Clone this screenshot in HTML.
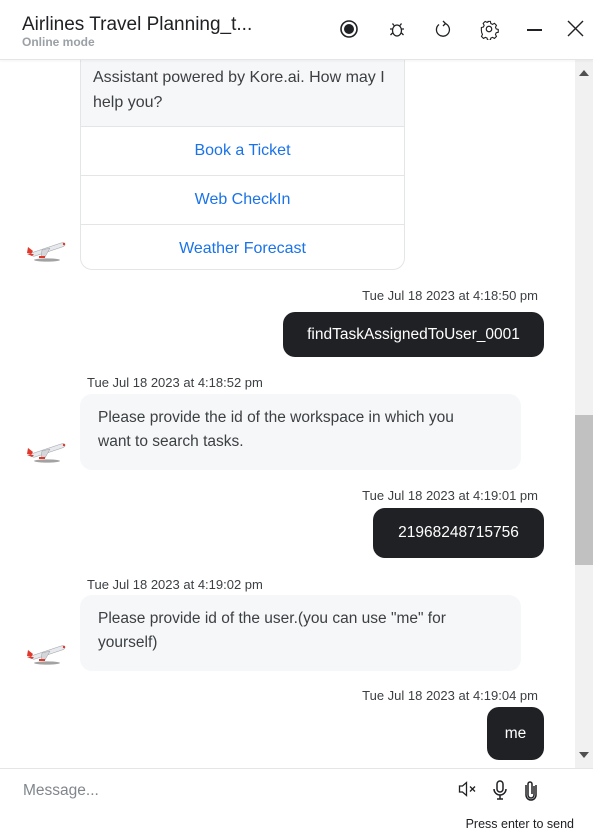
<!DOCTYPE html>
<html><head><meta charset="utf-8"><style>
*{box-sizing:border-box;margin:0;padding:0}
body{width:593px;height:834px;overflow:hidden;background:#fff;font-family:"Liberation Sans",sans-serif;position:relative;color:#202124}
.abs{position:absolute}
.hdr{left:0;top:0;width:593px;height:60px;border-bottom:1px solid #e4e5e7;background:#fff;z-index:5;box-shadow:0 1px 3px rgba(0,0,0,.05)}
.title{left:22px;top:14px;font-size:19px;color:#202124}
.sub{left:22px;top:35px;font-size:12px;font-weight:bold;color:#9aa0a6}
.scroll{left:575px;top:60px;width:18px;height:708px;background:#f1f1f1}
.thumb{left:575px;top:415px;width:18px;height:150px;background:#c1c1c1}
.bot{background:#f6f7f9;border-radius:12px;font-size:15.5px;line-height:24px;color:#3c4043;padding:12px 18px}
.user{background:#202124;color:#fff;border-radius:12px;font-size:15.5px;text-align:center;display:flex;align-items:center;justify-content:center}
.ts{font-size:13px;color:#3c4043}
.btn{left:80px;width:325px;height:49px;border-top:1px solid #e4e5e7;color:#1a73e8;font-size:16px;text-align:center;line-height:48px}
</style></head><body>
<svg width="0" height="0" style="position:absolute"><defs><g id="pl">
<ellipse cx="22" cy="24" rx="13" ry="1.6" fill="#555" opacity=".55"/>
<path d="M6 17 L36 7 Q40 6 40 8.5 Q40 10 37 11 L10 20 Q7 21 6 17Z" fill="#e8e9ec" stroke="#a0a4aa" stroke-width=".6"/>
<path d="M3 11 L8 15 L6 18 L2 17Z" fill="#e0392b"/>
<path d="M2 18 L9 18 L7 20Z" fill="#e0392b"/>
<path d="M17 14 L25 12 L20 21 L16 21Z" fill="#d4d6da" stroke="#9aa0a6" stroke-width=".5"/>
<rect x="14" y="20" width="6" height="2" fill="#e0392b"/>
<circle cx="39" cy="8" r="1.2" fill="#e0392b"/>
</g></defs></svg>
<div class="abs hdr">
<div class="abs title">Airlines Travel Planning_t...</div>
<div class="abs sub">Online mode</div>
<svg class="abs" style="left:336px;top:16px" width="26" height="26" viewBox="0 0 26 26"><circle cx="13" cy="13" r="8" fill="none" stroke="#202124" stroke-width="1.6"/><circle cx="13" cy="13" r="5" fill="#202124"/></svg>
<svg class="abs" style="left:386px;top:18px" width="22" height="22" viewBox="0 0 22 22" fill="none" stroke="#202124" stroke-width="1.3"><ellipse cx="11" cy="12.5" rx="4.5" ry="5.5"/><path d="M8 7.5l-1.5-2M14 7.5l1.5-2M6.5 11H4M18 11h-2.5M6.5 15l-2 2M15.5 15l2 2"/></svg>
<svg class="abs" style="left:432px;top:18px" width="22" height="22" viewBox="0 0 22 22" fill="none" stroke="#202124" stroke-width="1.3"><path d="M13 5.5A6.5 6.5 0 1 1 7 6.5"/><path d="M11 3l2.5 2.5L11 8"/></svg>
<svg class="abs" style="left:478px;top:18px" width="22" height="22" viewBox="0 0 24 24" fill="none" stroke="#202124" stroke-width="1.3"><circle cx="12" cy="12" r="3"/><path d="M10.3 3h3.4l.5 2.5 2 1 2.3-1.2 2.4 2.4-1.2 2.3.9 2 2.4.6v3.4l-2.4.5-.9 2 1.2 2.3-2.4 2.4-2.3-1.2-2 .9-.5 2.4h-3.4l-.5-2.4-2-.9-2.3 1.2-2.4-2.4 1.2-2.3-.9-2L3 13.7v-3.4l2.4-.6.9-2-1.2-2.3 2.4-2.4 2.3 1.2 2-1z" transform="scale(.92) translate(1 1)"/></svg>
<div class="abs" style="left:527px;top:29px;width:15px;height:1.5px;background:#202124"></div>
<svg class="abs" style="left:567px;top:20px" width="17" height="17" viewBox="0 0 17 17" stroke="#202124" stroke-width="1.4"><path d="M1 1l15 15M16 1L1 16"/></svg>
</div>
<div class="abs scroll"></div><div class="abs thumb"></div>
<div class="abs" style="left:579px;top:70px;width:0;height:0;border-left:5px solid transparent;border-right:5px solid transparent;border-bottom:6px solid #505050"></div>
<div class="abs" style="left:579px;top:752px;width:0;height:0;border-left:5px solid transparent;border-right:5px solid transparent;border-top:6px solid #505050"></div>

<div class="abs" style="left:80px;top:30px;width:325px;height:240px;border:1px solid #e4e5e7;border-radius:12px;background:#fff;overflow:hidden">
<div style="background:#f6f7f9;height:96px;padding:34px 12px 0;font-size:16px;line-height:25px;color:#3c4043">Assistant powered by Kore.ai. How may I help you?</div>
</div>
<div class="abs btn" style="top:126px">Book a Ticket</div>
<div class="abs btn" style="top:175px">Web CheckIn</div>
<div class="abs btn" style="top:224px;border-bottom:none;height:45px">Weather Forecast</div>
<svg class="abs" style="left:25px;top:236px" width="44" height="28" viewBox="0 0 44 28"><use href="#pl"/></svg>

<div class="abs ts" style="right:55px;top:288px">Tue Jul 18 2023 at 4:18:50 pm</div>
<div class="abs user" style="left:283px;top:312px;width:261px;height:45px">findTaskAssignedToUser_0001</div>

<div class="abs ts" style="left:87px;top:375px">Tue Jul 18 2023 at 4:18:52 pm</div>
<div class="abs bot" style="left:80px;top:394px;width:441px;height:76px;padding-right:50px">Please provide the id of the workspace in which you want to search tasks.</div>
<svg class="abs" style="left:25px;top:437px" width="44" height="28" viewBox="0 0 44 28"><use href="#pl"/></svg>

<div class="abs ts" style="right:55px;top:488px">Tue Jul 18 2023 at 4:19:01 pm</div>
<div class="abs user" style="left:373px;top:508px;width:171px;height:50px">21968248715756</div>

<div class="abs ts" style="left:87px;top:577px">Tue Jul 18 2023 at 4:19:02 pm</div>
<div class="abs bot" style="left:80px;top:595px;width:441px;height:76px">Please provide id of the user.(you can use "me" for yourself)</div>
<svg class="abs" style="left:25px;top:639px" width="44" height="28" viewBox="0 0 44 28"><use href="#pl"/></svg>

<div class="abs ts" style="right:55px;top:688px">Tue Jul 18 2023 at 4:19:04 pm</div>
<div class="abs user" style="left:487px;top:707px;width:57px;height:53px">me</div>

<div class="abs" style="left:0;top:768px;width:593px;height:66px;background:#fff;border-top:1px solid #e4e5e7"></div>
<div class="abs" style="left:23px;top:782px;font-size:15.5px;color:#80868b">Message...</div>
<svg class="abs" style="left:458px;top:781px" width="20" height="16" viewBox="0 0 20 16" fill="none" stroke="#202124" stroke-width="1.3"><path d="M1.5 5h3l4-3.5v13L4.5 11h-3z"/><path d="M12 5.5l5 5M17 5.5l-5 5"/></svg>
<svg class="abs" style="left:490px;top:779px" width="20" height="22" viewBox="0 0 20 22" fill="none" stroke="#202124" stroke-width="1.5"><rect x="7" y="2" width="6" height="11" rx="3"/><path d="M4 10a6 6 0 0 0 12 0M10 16v4M7 20h6"/></svg>
<svg class="abs" style="left:523px;top:779px" width="16" height="22" viewBox="0 0 16 22" fill="none" stroke="#202124" stroke-width="1.5"><path d="M11 7v9a3 3 0 0 1-6 0V5a2 2 0 0 1 4 0v10"/><path d="M13 6v10a5 5 0 0 1-10 0V6"/></svg>
<div class="abs" style="right:19px;top:817px;font-size:12.5px;color:#202124">Press enter to send</div>
</body></html>
